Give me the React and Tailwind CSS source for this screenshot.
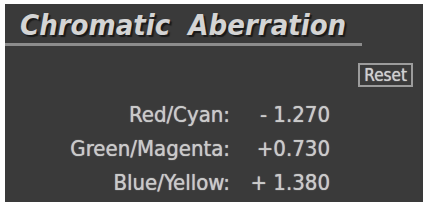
import React from 'react';

const rows = [
    { label: 'Red/Cyan:', value: '- 1.270' },
    { label: 'Green/Magenta:', value: '+0.730' },
    { label: 'Blue/Yellow:', value: '+ 1.380' },
];

const condensed = { fontFamily: '"DejaVu Sans Condensed", "DejaVu Sans", sans-serif' };

export default function App() {
    return (
        <div className="w-[423px] h-[206px] bg-white pl-[5px] pt-[4px] pb-[4px]">
            <div className="flex flex-col h-full bg-[#3a3a3a]" style={condensed}>
                {/* Title */}
                <div className="h-[39px] pl-[15px] pt-[7px]">
                    <h1
                        className="text-[29px] leading-[29px] font-bold italic font-stretch-condensed text-[#d4d4d4] [text-shadow:2px_2px_1px_#1a1a1a] whitespace-pre"
                    >
                        Chromatic  Aberration
                    </h1>
                </div>
                <div className="w-[357px] h-[3px] bg-[#8c8c8c]" />

                {/* Reset */}
                <div className="flex justify-end pr-[10px] pt-[17px]">
                    <button className="h-[24px] px-[4px] border-2 border-[#9c9c9c] text-[17px] leading-[18px] font-stretch-condensed text-[#d0d0d0] [text-shadow:0_0_1px_#d0d0d0]">
                        Reset
                    </button>
                </div>

                {/* Values */}
                <div className="grid grid-cols-[225px_100px] gap-y-[11px] pt-[16px] text-[22px] leading-[23px] font-normal font-stretch-condensed text-[#cacaca] [text-shadow:0_0_1px_#cacaca]">
                    {rows.map((r) => (
                        <React.Fragment key={r.label}>
                            <div className="text-right">{r.label}</div>
                            <div className="text-right whitespace-pre">{r.value}</div>
                        </React.Fragment>
                    ))}
                </div>
            </div>
        </div>
    );
}
